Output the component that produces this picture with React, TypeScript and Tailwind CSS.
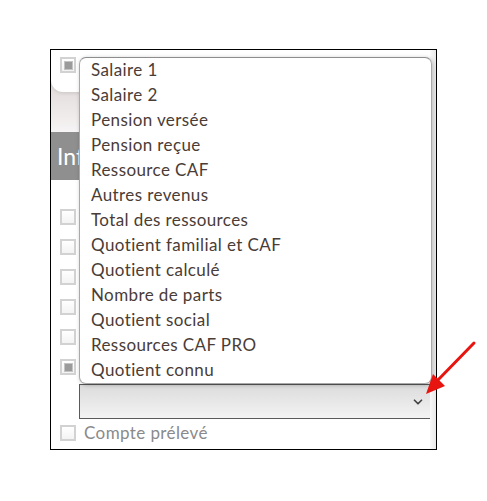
import { ChevronDown } from 'lucide-react'

const OPTIONS = [
  'Salaire 1',
  'Salaire 2',
  'Pension versée',
  'Pension reçue',
  'Ressource CAF',
  'Autres revenus',
  'Total des ressources',
  'Quotient familial et CAF',
  'Quotient calculé',
  'Nombre de parts',
  'Quotient social',
  'Ressources CAF PRO',
  'Quotient connu',
]

// checkbox column behind the open list (labels are hidden by it)
const ROWS = [false, false, false, false, false, true]

function Checkbox({ checked }: { checked: boolean }) {
  return (
    <div className="flex h-4 w-4 shrink-0 items-center justify-center border-2 border-[#d2d2d2] bg-gradient-to-b from-white to-[#f3f3f3]">
      {checked && <div className="h-[9px] w-[9px] border border-[#c4c4c4] bg-[#9b9b9b]" />}
    </div>
  )
}

export default function App() {
  return (
    <div className="relative h-[501px] w-full bg-white font-['Lato',sans-serif]">
      <div className="ml-[50px] pt-[49px]">
        <div className="relative h-[401px] w-[387px] overflow-hidden border border-black bg-white">
          {/* right edge shading */}
          <div className="absolute right-0 top-0 bottom-0 w-[6px] bg-gradient-to-r from-[#f8f8f8] to-[#e8e8e8]" />

          {/* top panel */}
          <div className="h-[82px] bg-gradient-to-b from-[#d3c9c8] to-[#f6f4f4]">
            <div className="flex h-[42px] items-start rounded-bl-[12px] bg-white pl-[9px] pt-[7px] shadow-[0_2px_3px_rgba(0,0,0,0.08)]">
              <Checkbox checked />
            </div>
          </div>

          {/* section header */}
          <div className="flex h-[48px] items-center bg-[#8f8f8f] pl-[6px] text-[23px] text-white">
            Informations
          </div>

          <div className="pt-[22px]">
            {ROWS.map((checked, i) => (
              <div key={i} className="flex h-[30px] items-center pl-[9px]">
                <Checkbox checked={checked} />
              </div>
            ))}
          </div>

          {/* select */}
          <div className="ml-[28px] mt-[2px] flex h-[35px] w-[353px] items-center justify-end border border-[#5a5a5a] bg-gradient-to-b from-[#dcdcdc] to-[#f3f3f3] pr-[6px]">
            <ChevronDown size={14} strokeWidth={3} className="text-[#444]" />
          </div>

          <div className="flex h-[28px] items-center gap-[8px] pl-[9px] text-[17px] tracking-[0.4px] text-[#8a8a8a]">
            <Checkbox checked={false} />
            <span>Compte prélevé</span>
          </div>

          {/* open dropdown list */}
          <div className="absolute left-[28px] top-[7px] h-[327px] w-[353px] rounded-[7px] border border-[#a9a9a9] border-t-[#8d8d8d] bg-white shadow-[1px_1px_4px_rgba(0,0,0,0.25)]">
            <div className="-mt-[1px]">
              {OPTIONS.map((opt) => (
                <div key={opt} className="h-[25px] pl-[11px] text-[17px] leading-[25px] tracking-[0.4px] text-[#4a3c36]">
                  {opt}
                </div>
              ))}
            </div>
          </div>
        </div>
      </div>

      {/* red arrow annotation */}
      <svg className="pointer-events-none absolute left-0 top-0" width="487" height="501">
        <line x1="474" y1="343" x2="437" y2="381" stroke="#e8140f" strokeWidth="3" strokeLinecap="round" />
        <polygon points="426,394 445,386 433,374" fill="#e8140f" />
      </svg>
    </div>
  )
}
